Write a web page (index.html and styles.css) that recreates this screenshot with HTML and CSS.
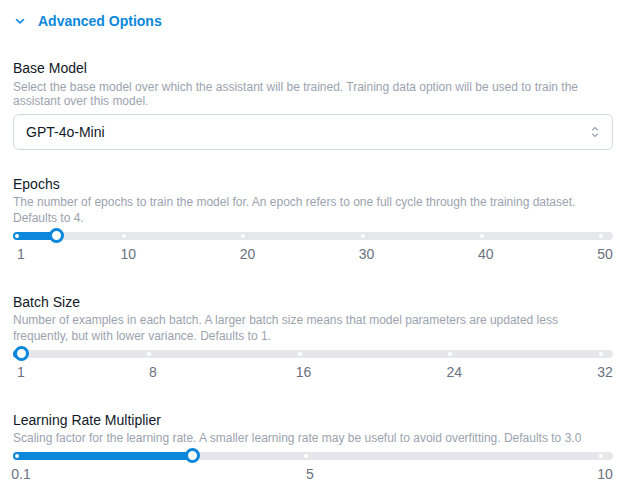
FILE: index.html
```html
<!DOCTYPE html>
<html>
<head>
<meta charset="utf-8">
<link rel="stylesheet" href="styles.css">
</head>
<body>
<div class="panel">
  <div class="header">
    <svg class="chev" width="10" height="8" viewBox="0 0 10 8"><polyline points="1.5,2.5 5,5.8 8.5,2.5" fill="none" stroke="#0b87dc" stroke-width="1.6" stroke-linecap="round" stroke-linejoin="round"/></svg>
    <span class="title">Advanced Options</span>
  </div>

  <div class="field field-model">
    <div class="label">Base Model</div>
    <div class="desc desc-tight">Select the base model over which the assistant will be trained. Training data option will be used to train the assistant over this model.</div>
    <div class="select">
      <span>GPT-4o-Mini</span>
      <svg class="updown" width="10" height="14" viewBox="0 0 10 14"><polyline points="2.5,5 5,2.5 7.5,5" fill="none" stroke="#9ca3af" stroke-width="1.1" stroke-linecap="round" stroke-linejoin="round"/><polyline points="2.5,9 5,11.5 7.5,9" fill="none" stroke="#9ca3af" stroke-width="1.1" stroke-linecap="round" stroke-linejoin="round"/></svg>
    </div>
  </div>

  <div class="field">
    <div class="label">Epochs</div>
    <div class="desc">The number of epochs to train the model for. An epoch refers to one full cycle through the training dataset. Defaults to 4.</div>
    <div class="track">
      <div class="fill" style="width: calc(8px + 0.0612 * (100% - 16px))"></div>
      <span class="dot" style="left: calc(4px + 0 * (100% - 16px))"></span>
      <span class="dot" style="left: calc(4px + 0.1837 * (100% - 16px))"></span>
      <span class="dot" style="left: calc(4px + 0.3878 * (100% - 16px))"></span>
      <span class="dot" style="left: calc(4px + 0.5918 * (100% - 16px))"></span>
      <span class="dot" style="left: calc(4px + 0.7959 * (100% - 16px))"></span>
      <span class="dot" style="left: calc(4px + 1 * (100% - 16px))"></span>
      <span class="thumb" style="left: calc(8px + 0.0612 * (100% - 16px))"></span>
    </div>
    <div class="ticks">
      <span class="tick" style="left: calc(8px + 0 * (100% - 16px))">1</span>
      <span class="tick" style="left: calc(8px + 0.1837 * (100% - 16px))">10</span>
      <span class="tick" style="left: calc(8px + 0.3878 * (100% - 16px))">20</span>
      <span class="tick" style="left: calc(8px + 0.5918 * (100% - 16px))">30</span>
      <span class="tick" style="left: calc(8px + 0.7959 * (100% - 16px))">40</span>
      <span class="tick" style="left: calc(8px + 1 * (100% - 16px))">50</span>
    </div>
  </div>

  <div class="field">
    <div class="label">Batch Size</div>
    <div class="desc">Number of examples in each batch. A larger batch size means that model parameters are updated less frequently, but with lower variance. Defaults to 1.</div>
    <div class="track">
      <div class="fill" style="width: calc(8px + 0 * (100% - 16px))"></div>
      <span class="dot" style="left: calc(4px + 0 * (100% - 16px))"></span>
      <span class="dot" style="left: calc(4px + 0.2258 * (100% - 16px))"></span>
      <span class="dot" style="left: calc(4px + 0.4839 * (100% - 16px))"></span>
      <span class="dot" style="left: calc(4px + 0.7419 * (100% - 16px))"></span>
      <span class="dot" style="left: calc(4px + 1 * (100% - 16px))"></span>
      <span class="thumb" style="left: calc(8px + 0 * (100% - 16px))"></span>
    </div>
    <div class="ticks">
      <span class="tick" style="left: calc(8px + 0 * (100% - 16px))">1</span>
      <span class="tick" style="left: calc(8px + 0.2258 * (100% - 16px))">8</span>
      <span class="tick" style="left: calc(8px + 0.4839 * (100% - 16px))">16</span>
      <span class="tick" style="left: calc(8px + 0.7419 * (100% - 16px))">24</span>
      <span class="tick" style="left: calc(8px + 1 * (100% - 16px))">32</span>
    </div>
  </div>

  <div class="field">
    <div class="label">Learning Rate Multiplier</div>
    <div class="desc">Scaling factor for the learning rate. A smaller learning rate may be useful to avoid overfitting. Defaults to 3.0</div>
    <div class="track">
      <div class="fill" style="width: calc(8px + 0.2929 * (100% - 16px))"></div>
      <span class="dot" style="left: calc(4px + 0 * (100% - 16px))"></span>
      <span class="dot" style="left: calc(4px + 0.4949 * (100% - 16px))"></span>
      <span class="dot" style="left: calc(4px + 1 * (100% - 16px))"></span>
      <span class="thumb" style="left: calc(8px + 0.2929 * (100% - 16px))"></span>
    </div>
    <div class="ticks">
      <span class="tick" style="left: calc(8px + 0 * (100% - 16px))">0.1</span>
      <span class="tick" style="left: calc(8px + 0.4949 * (100% - 16px))">5</span>
      <span class="tick" style="left: calc(8px + 1 * (100% - 16px))">10</span>
    </div>
  </div>
</div>
</body>
</html>
```

FILE: styles.css
```css
html, body {
  margin: 0;
  padding: 0;
  background: #ffffff;
}

body {
  font-family: "Liberation Sans", Arial, sans-serif;
  color: #111827;
}

.panel {
  padding: 11px 18px 0 13px;
}

.header {
  display: flex;
  align-items: center;
  height: 20px;
}

.chev {
  margin-left: 2px;
  margin-right: 13px;
}

.title {
  color: #0b87dc;
  font-weight: bold;
  font-size: 14px;
  line-height: 20px;
}

.field {
  margin-top: 28px;
}

.field-model {
  margin-top: 27px;
}

.field-model + .field {
  margin-top: 24px;
}

.label {
  font-size: 14px;
  line-height: 20px;
  color: #111827;
}

.desc {
  font-size: 12px;
  line-height: 16px;
  color: #9ca3af;
}

.desc-tight {
  line-height: 13.5px;
  margin-top: 3px;
}

.select {
  margin-top: 6px;
  height: 34px;
  border: 1px solid #d5d9e0;
  border-radius: 6px;
  display: flex;
  align-items: center;
  justify-content: space-between;
  padding: 0 12px 0 12px;
  font-size: 14px;
  color: #111827;
}

.track {
  position: relative;
  height: 8px;
  margin-top: 6px;
  background: #e5e7eb;
  border-radius: 4px;
}

.fill {
  position: absolute;
  left: 0;
  top: 0;
  height: 8px;
  background: #0b87dc;
  border-radius: 4px;
}

.dot {
  position: absolute;
  top: 2px;
  width: 4px;
  height: 4px;
  margin-left: -2px;
  border-radius: 50%;
  background: #ffffff;
}

.thumb {
  position: absolute;
  top: -4px;
  width: 9px;
  height: 9px;
  margin-left: -7.5px;
  border: 3px solid #0b87dc;
  border-radius: 50%;
  background: #ffffff;
}

.ticks {
  position: relative;
  height: 20px;
  margin-top: 4px;
}

.tick {
  position: absolute;
  top: 0;
  transform: translateX(-50%);
  font-size: 14px;
  line-height: 20px;
  color: #6b7280;
}
```
